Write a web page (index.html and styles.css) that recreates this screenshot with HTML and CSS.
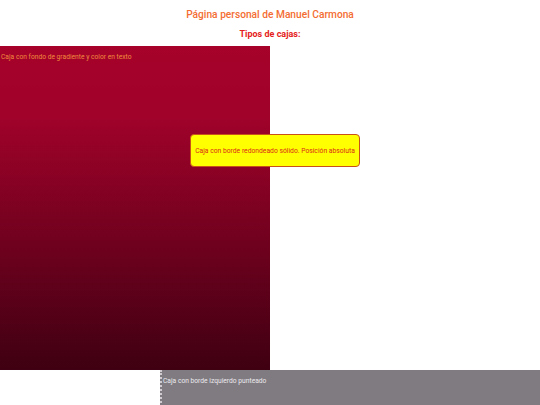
FILE: index.html
```html
<!DOCTYPE html>
<html lang="es">
<head>
<meta charset="utf-8">
<title>Página personal de Manuel Carmona</title>
<link rel="stylesheet" href="styles.css">
</head>
<body>
<header class="header">
  <h1 class="title">Página personal de Manuel Carmona</h1>
  <h2 class="subtitle">Tipos de cajas:</h2>
</header>
<main class="boxes">
  <div class="box-gradient">Caja con fondo de gradiente y color en texto</div>
  <div class="box-rounded">Caja con borde redondeado sólido. Posición absoluta</div>
  <div class="box-dotted">Caja con borde izquierdo punteado</div>
</main>
</body>
</html>
```
FILE: styles.css
```css
html, body {
  margin: 0;
  padding: 0;
  background: #ffffff;
  font-family: Roboto, "Liberation Sans", Arial, sans-serif;
  height: 405px;
  overflow: hidden;
}
.header {
  display: flex;
  flex-direction: column;
  align-items: center;
  padding-top: 8px;
  height: 39px;
  box-sizing: border-box;
}
.title {
  margin: 0;
  font-size: 10.2px;
  line-height: 14px;
  font-weight: 500;
  color: #f36d32;
}
.subtitle {
  margin: 6px 0 0 0;
  font-size: 9px;
  line-height: 12px;
  font-weight: 700;
  color: #e52020;
}
.boxes {
  position: relative;
  display: flex;
  flex-direction: column;
}
.box-gradient {
  width: 270px;
  height: 324px;
  box-sizing: border-box;
  padding: 7px 0 0 1px;
  font-size: 6.7px;
  line-height: 9px;
  color: #f08a3c;
  background: linear-gradient(to bottom, #a6022a 0%, #a0022a 22%, #3f0012 100%);
  margin-top: 7px;
}
.box-rounded {
  position: absolute;
  left: 190px;
  top: 95px;
  width: 170px;
  height: 33px;
  box-sizing: border-box;
  display: flex;
  align-items: center;
  justify-content: center;
  background: #ffff00;
  border: 1px solid #c8511a;
  border-radius: 4px;
  font-size: 6.75px;
  color: #d92b1a;
}
.box-dotted {
  margin-left: 160px;
  height: 40px;
  box-sizing: border-box;
  background: #7f7b80;
  border-left: 2px dotted #cfcbcf;
  padding: 7px 0 0 1px;
  font-size: 6.7px;
  line-height: 9px;
  color: #ece9ee;
}
```
